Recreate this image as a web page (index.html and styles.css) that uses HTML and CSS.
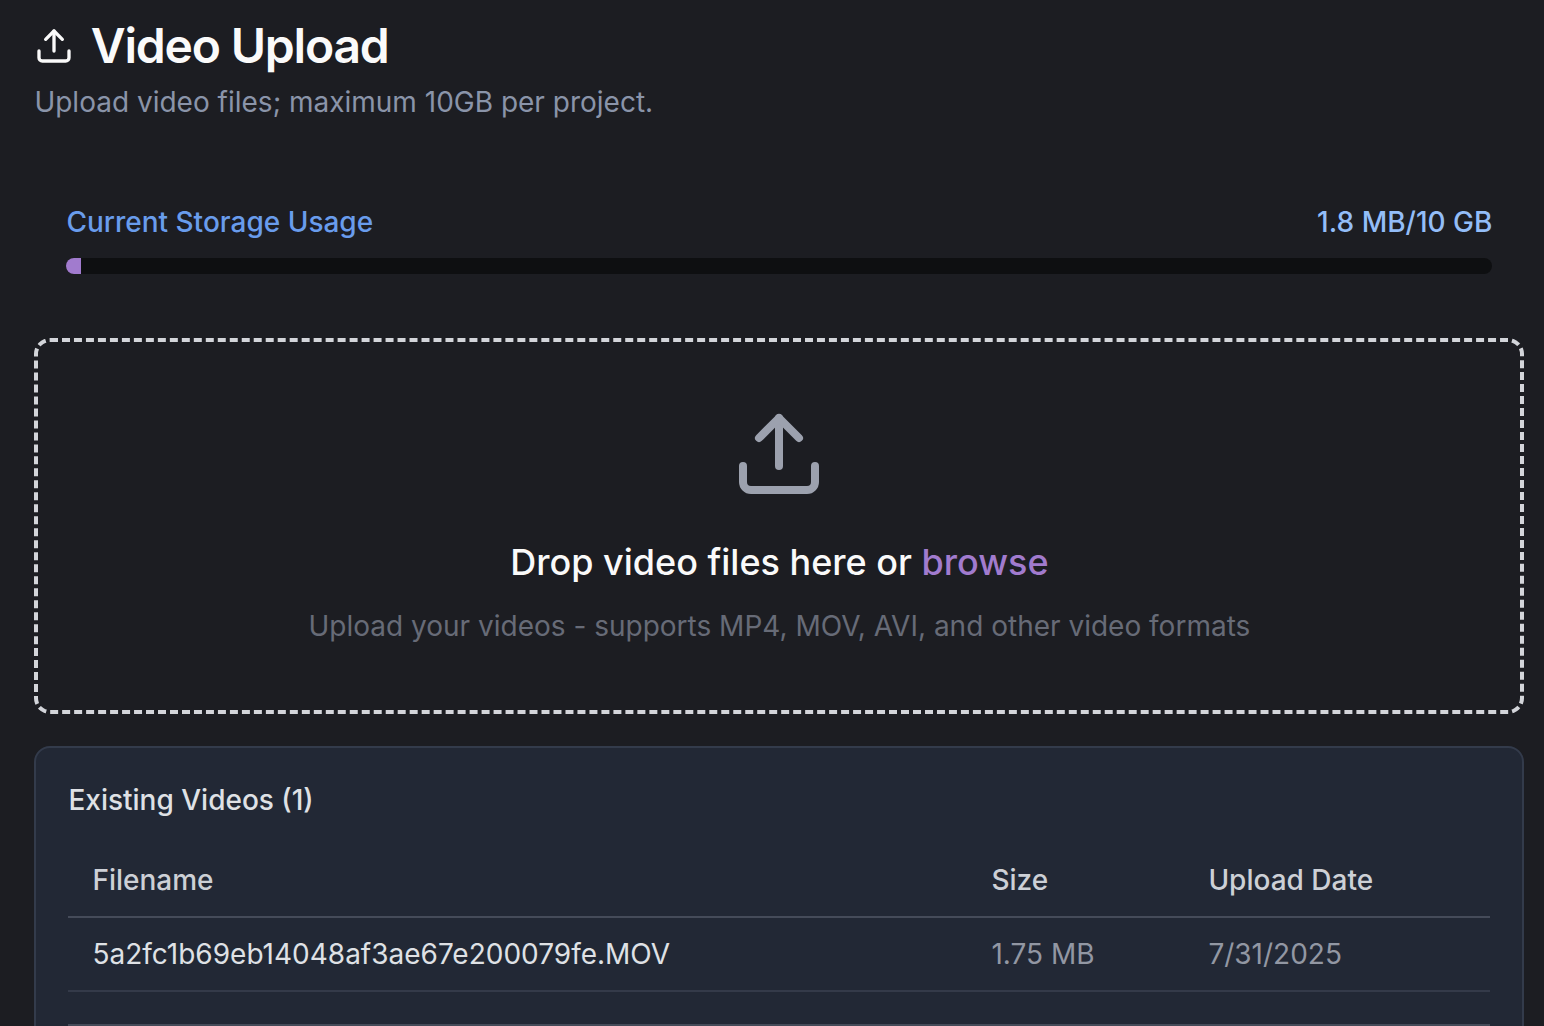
FILE: index.html
```html
<!DOCTYPE html>
<html lang="en">
<head>
<meta charset="utf-8">
<title>Video Upload</title>
<link rel="stylesheet" href="styles.css">
</head>
<body>
<main class="page">
  <header class="header">
    <h1 class="title">
      <svg class="title-icon" viewBox="0 0 24 24"><path d="M12 3v12"/><path d="m17 8-5-5-5 5"/><path d="M21 15v4a2 2 0 0 1-2 2H5a2 2 0 0 1-2-2v-4"/></svg>
      <span class="title-text">Video Upload</span>
    </h1>
    <p class="subtitle">Upload video files; maximum 10GB per project.</p>
  </header>
  <section class="storage">
    <div class="storage-row">
      <span class="storage-label">Current Storage Usage</span>
      <span class="storage-value">1.8 MB/10 GB</span>
    </div>
    <div class="track"><div class="fill" style="width: 1%"></div></div>
  </section>
  <section class="dropzone">
    <svg class="drop-icon" viewBox="0 0 24 24"><path d="M12 3v12"/><path d="m17 8-5-5-5 5"/><path d="M21 15v4a2 2 0 0 1-2 2H5a2 2 0 0 1-2-2v-4"/></svg>
    <p class="drop-title">Drop video files here or <a class="browse">browse</a></p>
    <p class="drop-hint">Upload your videos - supports MP4, MOV, AVI, and other video formats</p>
  </section>
  <section class="card">
    <h2 class="card-title">Existing Videos (1)</h2>
    <div class="table">
      <div class="row head"><span>Filename</span><span>Size</span><span>Upload Date</span></div>
      <div class="row item"><span class="name">5a2fc1b69eb14048af3ae67e200079fe.MOV</span><span>1.75 MB</span><span>7/31/2025</span></div>
    </div>
    <div class="card-footer"></div>
  </section>
</main>
</body>
</html>
```
FILE: styles.css
```css
* { box-sizing: border-box; margin: 0; padding: 0; }
html, body { height: 100%; overflow: hidden; }
body {
  background: #1c1d22;
  font-family: Inter, "Liberation Sans", sans-serif;
  font-size: 28px;
  line-height: 40px;
  font-weight: 400;
}
.page { padding: 14px 19.6px 0 34.4px; }
.header { height: 144px; }
.title {
  display: flex;
  align-items: center;
  gap: 16px;
  height: 64px;
  font-size: 48px;
  line-height: 64px;
  font-weight: 600;
  letter-spacing: -1.2px;
  color: #fafafa;
}
svg { fill: none; stroke: currentColor; stroke-width: 2; stroke-linecap: round; stroke-linejoin: round; }
.title-icon { width: 40px; height: 40px; }
.title-text { padding-left: 0.4px; }
.subtitle { margin-top: 4px; color: #8a94a9; }
.storage { height: 180px; padding: 44px 32px 0; }
.storage-row { display: flex; justify-content: space-between; }
.storage-label { color: #699cec; font-weight: 500; }
.storage-value { color: #93bdf8; font-weight: 500; }
.track { height: 16px; margin-top: 16px; border-radius: 8px; background: #0e0f11; overflow: hidden; }
.fill { height: 100%; background: #a17bce; }
.dropzone {
  height: 376px;
  border: 4px dashed #d3d5da;
  border-radius: 16px;
  padding-top: 64px;
  text-align: center;
}
.drop-icon { display: block; width: 96px; height: 96px; margin: 0 auto; color: #9ca1ae; }
.drop-title { margin-top: 32px; font-size: 36px; line-height: 56px; font-weight: 500; color: #fafafa; }
.browse { color: #a17bce; }
.drop-hint { margin-top: 16px; color: #676b77; }
.card {
  height: 320px;
  margin-top: 32px;
  padding: 32px;
  border: 2px solid #333b4b;
  border-radius: 16px;
  background: #222835;
}
.card-title { font-size: 28px; line-height: 40px; font-weight: 500; color: #dfe1e5; }
.table { margin-top: 24px; }
.row { display: grid; grid-template-columns: 899px 217px 1fr; padding: 16px 0 0 24px; }
.head { height: 74px; border-bottom: 2px solid #454b59; color: #cdd0d6; font-weight: 500; }
.item { height: 74px; border-bottom: 2px solid #343a49; color: #9297a3; }
.name { color: #dfe1e5; }
.card-footer { margin-top: 32px; border-top: 2px solid #454b59; }
```
